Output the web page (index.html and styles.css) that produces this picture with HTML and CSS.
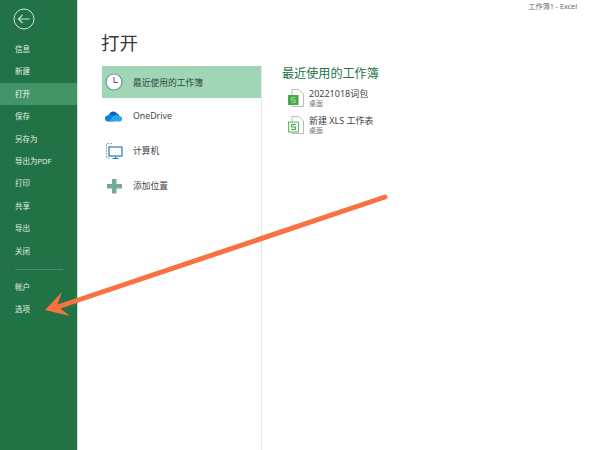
FILE: index.html
```html
<!DOCTYPE html>
<html lang="zh-CN">
<head>
  <meta charset="UTF-8">
  <title>工作簿1 - Excel</title>
  <link rel="stylesheet" href="styles.css">
</head>
<body>
  <div class="app">
    <!-- Left green menu -->
    <nav class="sidebar">
      <svg class="back-btn" width="24" height="24" viewBox="0 0 24 24">
        <circle cx="12" cy="12" r="10" fill="none" stroke="#cfe3d7" stroke-width="1"/>
        <path d="M6.5 12H17.5M10.5 8L6.5 12L10.5 16" fill="none" stroke="#cfe3d7" stroke-width="1.1"/>
      </svg>
      <ul class="menu">
        <li>信息</li>
        <li>新建</li>
        <li class="active">打开</li>
        <li>保存</li>
        <li>另存为</li>
        <li>导出为PDF</li>
        <li>打印</li>
        <li>共享</li>
        <li>导出</li>
        <li>关闭</li>
      </ul>
      <div class="menu-divider"></div>
      <ul class="menu">
        <li>帐户</li>
        <li>选项</li>
      </ul>
    </nav>

    <main class="content">
      <div class="window-title">工作簿1 - Excel</div>
      <h1>打开</h1>
      <div class="columns">
        <!-- Places -->
        <div class="places">
          <div class="place selected">
            <svg width="20" height="20" viewBox="0 0 20 20">
              <circle cx="10" cy="10" r="8" fill="#fff" stroke="#6f93a8" stroke-width="1.2"/>
              <path d="M10 5V10.5H14" fill="none" stroke="#555" stroke-width="1"/>
            </svg>
            <span>最近使用的工作簿</span>
          </div>
          <div class="place">
            <svg width="20" height="20" viewBox="0 0 20 20">
              <path d="M5 8.5A4.5 4.5 0 0 1 13 7.5A3.5 3.5 0 0 1 15.5 10.5L8 12Z" fill="#0f5fb5"/>
              <path d="M4.5 15.5A3 3 0 0 1 3.5 9.5A3.5 3.5 0 0 1 8 9L10 10.5L9 15.5Z" fill="#1180d8"/>
              <path d="M5 15.5L9 10.5A4 4 0 0 1 15 10A2.8 2.8 0 0 1 16 15.5Z" fill="#2aa4ea"/>
            </svg>
            <span>OneDrive</span>
          </div>
          <div class="place">
            <svg width="20" height="20" viewBox="0 0 20 20">
              <path d="M8 2.5H2.5V17H6" fill="none" stroke="#aaa" stroke-width="1" stroke-dasharray="2 1"/>
              <rect x="5" y="6" width="13" height="9" fill="#fff" stroke="#2b79b8" stroke-width="1.2"/>
              <path d="M11.5 15V17M8.5 17.5H14.5" stroke="#2b79b8" stroke-width="1.2"/>
            </svg>
            <span>计算机</span>
          </div>
          <div class="place">
            <svg width="20" height="20" viewBox="0 0 20 20">
              <path d="M8 3H12.5V8H18V12.5H12.5V17.5H8V12.5H3V8H8Z" fill="#72ab97"/>
            </svg>
            <span>添加位置</span>
          </div>
        </div>

        <!-- Recent files -->
        <section class="recent">
          <h2>最近使用的工作簿</h2>
          <div class="file">
            <svg width="16" height="18" viewBox="0 0 16 18">
              <path d="M4 0.5H11L15.5 5V17.5H4Z" fill="#fff" stroke="#aaa" stroke-width="0.8"/>
              <rect x="0" y="6" width="10.5" height="10" fill="#45a84a"/>
              <path d="M7.3 8.7H3.3V11H7.3V13.3H3.3" fill="none" stroke="#a6dba9" stroke-width="1"/>
            </svg>
            <div>
              <div class="file-name">20221018词包</div>
              <div class="file-path">桌面</div>
            </div>
          </div>
          <div class="file">
            <svg width="16" height="18" viewBox="0 0 16 18">
              <path d="M4 0.5H11L15.5 5V17.5H4Z" fill="#fff" stroke="#aaa" stroke-width="0.8"/>
              <rect x="0.5" y="6" width="10" height="10" fill="#eef8ee" stroke="#52b257" stroke-width="0.9"/>
              <path d="M7.5 8.5H3.5V11H7.5V13.5H3.5" fill="none" stroke="#3da544" stroke-width="1"/>
            </svg>
            <div>
              <div class="file-name">新建 XLS 工作表</div>
              <div class="file-path">桌面</div>
            </div>
          </div>
        </section>
      </div>
    </main>

    <!-- Annotation arrow over the screenshot -->
    <svg class="arrow" width="600" height="450" viewBox="0 0 600 450">
      <path d="M385 197L56 307.5" stroke="#f97141" stroke-width="5" stroke-linecap="round"/>
      <path d="M45 310L62 292L57 306L70 316Z" fill="#f97141"/>
    </svg>
  </div>
</body>
</html>
```

FILE: styles.css
```css
/* General Styles */
html, body {
  margin: 0;
  padding: 0;
  height: 100%;
  overflow: hidden;
}

body {
  font-family: "Noto Sans", "Noto Sans CJK SC", sans-serif;
  background-color: #fff;
  color: #444;
}

.app {
  position: relative;
  display: flex;
  height: 450px;
}

/* Sidebar */
.sidebar {
  flex: 0 0 78px;
  background-color: #217346;
  color: #e3eee8;
  border-right: 1px solid #cfe0d7;
  box-sizing: border-box;
  padding-top: 7px;
}

.back-btn {
  display: block;
  margin: 0 0 7px 12px;
}

.menu {
  list-style: none;
  margin: 0;
  padding: 0;
}

.menu li {
  height: 22.4px;
  line-height: 22.4px;
  padding-left: 15px;
  font-size: 7.5px;
  white-space: nowrap;
}

.menu li.active {
  background-color: #439467;
  color: #fff;
}

.menu-divider {
  height: 1px;
  margin: 7px 14px 6px 15px;
  background-color: #4a8c69;
}

/* Main area */
.content {
  flex: 1;
  padding-left: 23px;
}

.window-title {
  height: 13px;
  line-height: 13px;
  margin-right: 23px;
  text-align: right;
  font-size: 7.2px;
  color: #666;
}

h1 {
  margin: 17px 0 0;
  height: 36px;
  line-height: 26px;
  font-size: 18.5px;
  font-weight: 400;
  color: #3a3a3a;
}

.columns {
  display: flex;
  height: 384px;
}

/* Places column */
.places {
  flex: 0 0 160px;
  border-right: 1px solid #e6e6e6;
}

.place {
  display: flex;
  align-items: center;
  gap: 9px;
  height: 35px;
  padding-left: 3px;
  font-size: 8.75px;
  color: #444;
}

.place.selected {
  height: 32px;
  margin-left: 1px;
  padding-left: 2px;
  background-color: #a0d5b6;
  color: #2d4a3b;
}

/* Recent files */
.recent {
  padding: 0 0 0 20px;
}

h2 {
  margin: 0 0 3px;
  font-size: 12.1px;
  line-height: 15px;
  font-weight: 400;
  color: #217346;
}

.file {
  display: flex;
  align-items: center;
  gap: 5px;
  height: 27px;
  padding-left: 6px;
}

.file-name {
  font-size: 9px;
  line-height: 11px;
  color: #444;
}

.file-path {
  font-size: 7px;
  line-height: 9px;
  color: #777;
}

/* Annotation */
.arrow {
  position: absolute;
  left: 0;
  top: 0;
  pointer-events: none;
}
```
